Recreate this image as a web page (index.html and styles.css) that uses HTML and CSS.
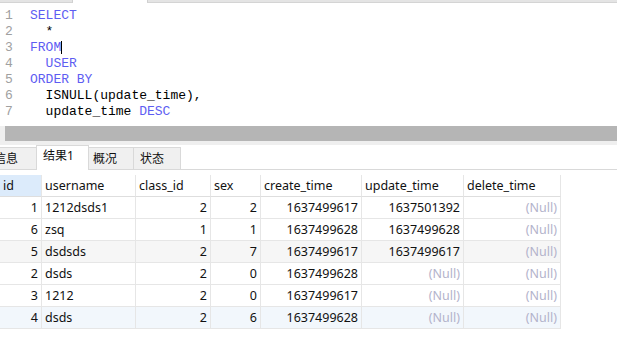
FILE: index.html
```html
<!DOCTYPE html>
<html lang="zh-CN">
<head>
    <meta charset="UTF-8">
    <title>查询</title>
    <link rel="stylesheet" href="styles.css">
</head>
<body>
    <div class="tabline">
        <span class="tl-side tl-left"></span>
        <span class="tl-gap"></span>
        <span class="tl-side tl-right"></span>
    </div>

    <div class="editor">
        <div class="gutter">1<br>2<br>3<br>4<br>5<br>6<br>7</div>
<pre class="code"><span class="kw">SELECT</span>
  *
<span class="kw">FROM</span><span class="caret"></span>
  <span class="kw">USER</span>
<span class="kw">ORDER BY</span>
  ISNULL(update_time),
  update_time <span class="kw">DESC</span></pre>
    </div>

    <div class="splitter"><div class="thumb"></div></div>

    <div class="tabs">
        <div class="tab first">信息</div>
        <div class="tab active">结果1</div>
        <div class="tab">概况</div>
        <div class="tab last">状态</div>
    </div>

    <table class="grid">
        <thead>
            <tr>
                <th class="c-id sel">id</th>
                <th class="c-user">username</th>
                <th class="c-class">class_id</th>
                <th class="c-sex">sex</th>
                <th class="c-time">create_time</th>
                <th class="c-upd">update_time</th>
                <th class="c-del">delete_time</th>
            </tr>
        </thead>
        <tbody>
            <tr>
                <td class="num">1</td><td>1212dsds1</td><td class="num">2</td><td class="num">2</td>
                <td class="num">1637499617</td><td class="num">1637501392</td><td class="num null">(Null)</td>
            </tr>
            <tr>
                <td class="num">6</td><td>zsq</td><td class="num">1</td><td class="num">1</td>
                <td class="num">1637499628</td><td class="num">1637499628</td><td class="num null">(Null)</td>
            </tr>
            <tr class="alt">
                <td class="num">5</td><td>dsdsds</td><td class="num">2</td><td class="num">7</td>
                <td class="num">1637499617</td><td class="num">1637499617</td><td class="num null">(Null)</td>
            </tr>
            <tr>
                <td class="num">2</td><td>dsds</td><td class="num">2</td><td class="num">0</td>
                <td class="num">1637499628</td><td class="num null">(Null)</td><td class="num null">(Null)</td>
            </tr>
            <tr>
                <td class="num">3</td><td>1212</td><td class="num">2</td><td class="num">0</td>
                <td class="num">1637499617</td><td class="num null">(Null)</td><td class="num null">(Null)</td>
            </tr>
            <tr class="current">
                <td class="num">4</td><td>dsds</td><td class="num">2</td><td class="num">6</td>
                <td class="num">1637499628</td><td class="num null">(Null)</td><td class="num null">(Null)</td>
            </tr>
        </tbody>
    </table>
</body>
</html>
```

FILE: styles.css
```css
body {
    margin: 0;
    background-color: #fff;
    font-family: "Noto Sans", "Noto Sans CJK SC", sans-serif;
    color: #111;
}

/* editor tab strip, only its bottom edge is visible */
.tabline {
    display: flex;
    height: 3px;
}

.tl-side {
    background-color: #e4e4e4;
    border-bottom: 1px solid #d4d4d4;
    box-sizing: border-box;
}

.tl-left {
    width: 73px;
    border-right: 1px solid #d0d0d0;
}

.tl-gap {
    width: 74px;
}

.tl-right {
    flex: 1;
    border-left: 1px solid #d0d0d0;
}

.editor {
    display: flex;
    height: 123px;
    padding-top: 5px;
    box-sizing: border-box;
    font-family: "Liberation Mono", monospace;
    font-size: 13px;
    line-height: 16px;
}

.gutter {
    width: 30px;
    padding-left: 5px;
    box-sizing: border-box;
    color: #a0a0a0;
}

.code {
    margin: 0;
    font: inherit;
    color: #000;
}

.kw {
    color: #5d5df2;
}

.caret {
    display: inline-block;
    width: 0;
    height: 13px;
    border-left: 1px solid #000;
    vertical-align: -3px;
}

.splitter {
    height: 19px;
    background-color: #efefef;
    padding-left: 5px;
    background-image: linear-gradient(#fff, #fff);
    background-size: 100% 0;
}

.thumb {
    height: 15px;
    background-color: #b5b5b5;
}

.tabs {
    display: flex;
    align-items: flex-end;
    height: 25px;
    border-bottom: 1px solid #d9d9d9;
    box-sizing: border-box;
}

.tab {
    height: 22px;
    line-height: 21px;
    font-size: 12px;
    padding-left: 5px;
    box-sizing: border-box;
    background-color: #f0f0f0;
    border: 1px solid #d9d9d9;
    border-bottom: none;
    margin-left: -1px;
}

.tab.first {
    width: 44px;
    margin-left: -7px;
    padding-left: 0;
}

.tab.active {
    width: 53px;
    height: 25px;
    margin-bottom: -1px;
    background-color: #fff;
    padding-left: 6px;
    line-height: 20px;
}

.tab:nth-child(3) {
    width: 46px;
    padding-left: 4px;
}

.tab.last {
    width: 48px;
    padding-left: 6px;
}

.grid {
    margin-top: 5px;
    border-collapse: separate;
    border-spacing: 0;
    table-layout: fixed;
    width: 561px;
    font-size: 12.5px;
}

.grid th,
.grid td {
    height: 22px;
    padding: 0 3px;
    box-sizing: border-box;
    border-right: 1px solid #e6e6e6;
    border-bottom: 1px solid #e6e6e6;
    white-space: nowrap;
    overflow: hidden;
}

.grid th {
    font-weight: normal;
    text-align: left;
    border-bottom-color: #dedede;
}

.grid th.sel {
    background-color: #dcebfb;
}

.c-id { width: 42px; }
.c-user { width: 94px; }
.c-class { width: 75px; }
.c-sex { width: 50px; }
.c-time { width: 101px; }
.c-upd { width: 102px; }
.c-del { width: 97px; }

.grid td.num {
    text-align: right;
}

.grid td.null {
    color: #b3b3cb;
}

.grid tr.alt td {
    background-color: #f6f6f6;
}

.grid tr.current td {
    background-color: #f2f7fc;
}
```
